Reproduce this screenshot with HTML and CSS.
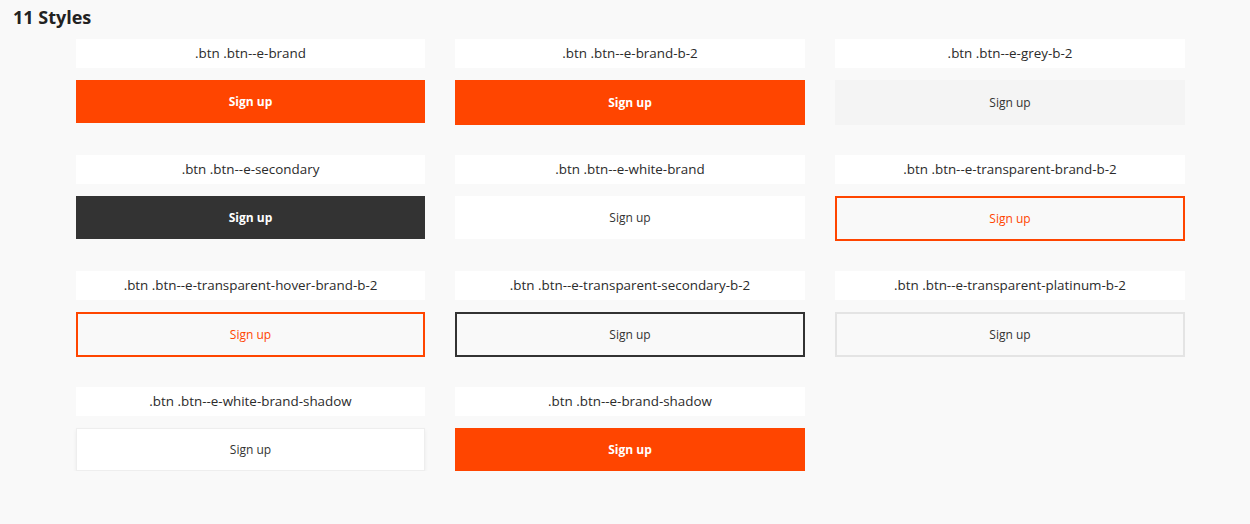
FILE: index.html
```html
<!DOCTYPE html>
<html lang="en">
<head>
<meta charset="utf-8">
<title>11 Styles</title>
<link rel="stylesheet" href="styles.css">
</head>
<body>
<h1 class="title">11 Styles</h1>
<div class="grid">
  <div class="card">
    <div class="label">.btn .btn--e-brand</div>
    <button class="btn btn--e-brand">Sign up</button>
  </div>
  <div class="card">
    <div class="label">.btn .btn--e-brand-b-2</div>
    <button class="btn btn--e-brand-b-2">Sign up</button>
  </div>
  <div class="card">
    <div class="label">.btn .btn--e-grey-b-2</div>
    <button class="btn btn--e-grey-b-2">Sign up</button>
  </div>
  <div class="card">
    <div class="label">.btn .btn--e-secondary</div>
    <button class="btn btn--e-secondary">Sign up</button>
  </div>
  <div class="card">
    <div class="label">.btn .btn--e-white-brand</div>
    <button class="btn btn--e-white-brand">Sign up</button>
  </div>
  <div class="card">
    <div class="label">.btn .btn--e-transparent-brand-b-2</div>
    <button class="btn btn--e-transparent-brand-b-2">Sign up</button>
  </div>
  <div class="card">
    <div class="label">.btn .btn--e-transparent-hover-brand-b-2</div>
    <button class="btn btn--e-transparent-hover-brand-b-2">Sign up</button>
  </div>
  <div class="card">
    <div class="label">.btn .btn--e-transparent-secondary-b-2</div>
    <button class="btn btn--e-transparent-secondary-b-2">Sign up</button>
  </div>
  <div class="card">
    <div class="label">.btn .btn--e-transparent-platinum-b-2</div>
    <button class="btn btn--e-transparent-platinum-b-2">Sign up</button>
  </div>
  <div class="card">
    <div class="label">.btn .btn--e-white-brand-shadow</div>
    <button class="btn btn--e-white-brand-shadow">Sign up</button>
  </div>
  <div class="card">
    <div class="label">.btn .btn--e-brand-shadow</div>
    <button class="btn btn--e-brand-shadow">Sign up</button>
  </div>
</div>
</body>
</html>
```
FILE: styles.css
```css
* { box-sizing: border-box; }

html, body {
  margin: 0;
  background: #f9f9f9;
}

body {
  font-family: "Open Sans", "Liberation Sans", sans-serif;
  color: #333;
  padding: 5px 0 0 13px;
}

.title {
  margin: 0;
  font-size: 18px;
  line-height: 24px;
  font-weight: 700;
  color: #222;
}

.grid {
  margin: 10px 0 0 63px;
  width: 1109px;
  display: grid;
  grid-template-columns: 349px 350px 350px;
  column-gap: 30px;
  row-gap: 30px;
  align-items: start;
}

.card {
  display: flex;
  flex-direction: column;
  gap: 12px;
}

.label {
  height: 29px;
  background: #fff;
  display: flex;
  align-items: center;
  justify-content: center;
  padding-bottom: 1px;
  font-size: 13.4px;
  color: #2b2b2b;
}

.btn {
  font-family: inherit;
  font-size: 12px;
  height: 43px;
  border: 0;
  padding: 0;
  margin: 0;
  width: 100%;
  display: flex;
  align-items: center;
  justify-content: center;
  color: #333;
  background: transparent;
  cursor: pointer;
}

.btn--e-brand,
.btn--e-brand-shadow {
  background: #ff4500;
  color: #fff;
  font-weight: 700;
}

.btn--e-brand-b-2 {
  height: 45px;
  background: #ff4500;
  border: 2px solid #ff4500;
  color: #fff;
  font-weight: 700;
}

.btn--e-grey-b-2 {
  height: 45px;
  background: #f4f4f4;
  border: 2px solid #f4f4f4;
}

.btn--e-secondary {
  background: #333;
  color: #fff;
  font-weight: 700;
}

.btn--e-white-brand {
  background: #fff;
}

.btn--e-transparent-brand-b-2,
.btn--e-transparent-hover-brand-b-2 {
  height: 45px;
  border: 2px solid #ff4500;
  color: #ff4500;
}

.btn--e-transparent-secondary-b-2 {
  height: 45px;
  border: 2px solid #333;
}

.btn--e-transparent-platinum-b-2 {
  height: 45px;
  border: 2px solid #e4e4e4;
}

.btn--e-white-brand-shadow {
  background: #fff;
  border: 1px solid #eee;
  box-shadow: 0 2px 4px rgba(0, 0, 0, 0.06);
}
```
